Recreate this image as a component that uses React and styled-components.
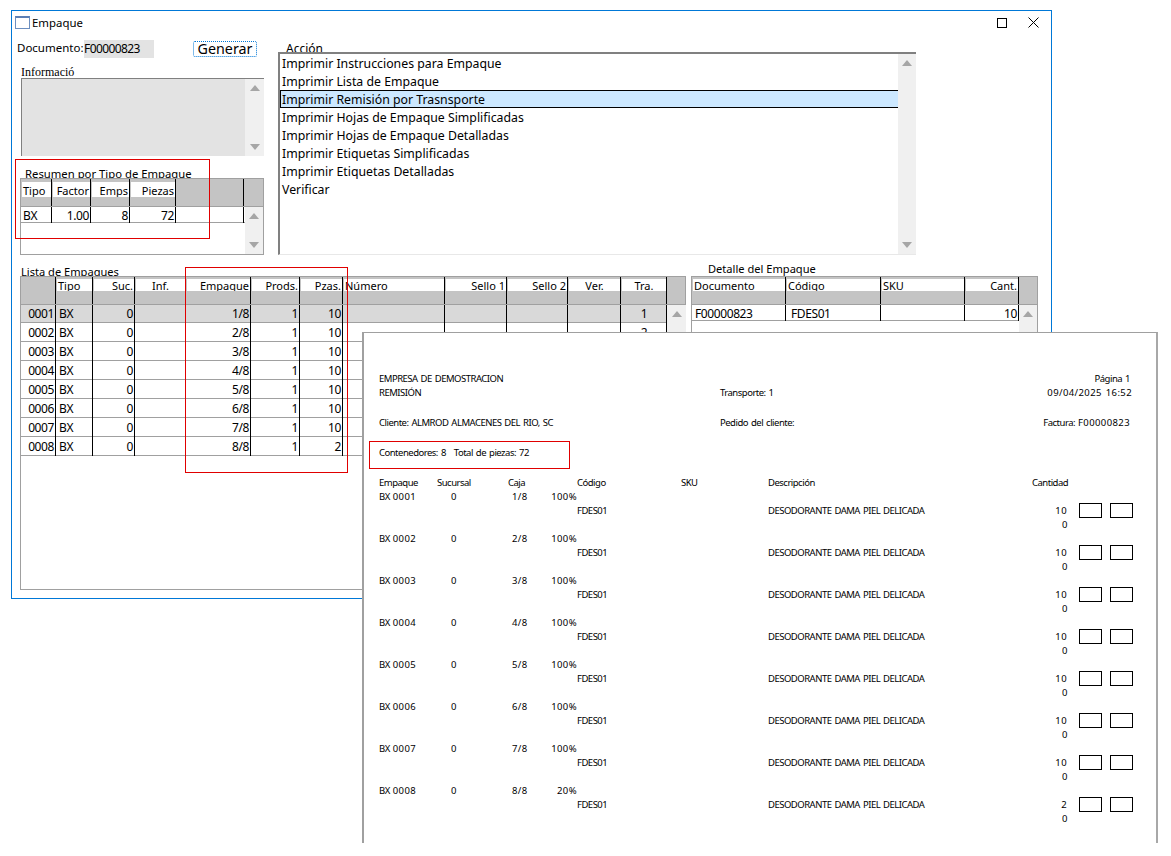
import React from 'react';
import styled, { createGlobalStyle } from 'styled-components';

const Global = createGlobalStyle`
  html, body { margin: 0; padding: 0; background: #fff; }
  body { font-family: "Noto Sans", "Open Sans", sans-serif; font-size: 12px; color: #000; }
`;

const Desk = styled.div`
  position: relative;
  width: 1171px;
  height: 856px;
  overflow: hidden;
`;
const Window = styled.div`
  position: absolute;
  left: 11px;
  top: 10px;
  width: 1041px;
  height: 589px;
  box-sizing: border-box;
  border: 1px solid #0078d7;
  background: #fff;
`;
const TitleBar = styled.div`
  height: 29px;
  display: flex;
  align-items: center;
  padding: 0 12px 6px 3px;
  box-sizing: border-box;
  gap: 2px;
`;
const TitleIcon = styled.span`
  width: 13px;
  height: 10px;
  border: 1px solid #6d8fc0;
  border-top: 2px solid #5b7fb5;
  box-sizing: content-box;
`;
const TitleText = styled.span`
  font-size: 11.4px;
  flex: 1;
`;
const WinButtons = styled.div`
  display: flex;
  align-items: center;
  gap: 21px;
`;
const TopArea = styled.div`
  display: flex;
  padding-left: 5px;
`;
const LeftCol = styled.div`
  width: 247px;
  flex: none;
`;
const DocRow = styled.div`
  height: 26px;
  display: flex;
  align-items: flex-start;
`;
const DocLabel = styled.span`
  line-height: 15px;
  font-size: 11.5px;
  width: 67px;
  flex: none;
`;
const DocValue = styled.span`
  width: 70px;
  height: 18px;
  line-height: 17px;
  background: #e3e3e3;
  font-size: 12px;
  letter-spacing: -0.6px;
  flex: none;
`;
const GenerarBtn = styled.button`
  margin: 1px 0 0 39px;
  width: 64px;
  height: 16px;
  padding: 0;
  font-family: inherit;
  font-size: 14.3px;
  line-height: 14px;
  background: #fff;
  color: #000;
  border: 1px dotted #0078d7;
  border-radius: 2px;
`;
const SerifLabel = styled.div`
  font-family: "Liberation Serif", serif;
  font-size: 12px;
  line-height: 12px;
  height: 12px;
  margin-left: 4px;
`;
const InfoBox = styled.div`
  margin-left: 4px;
  width: 243px;
  height: 78px;
  box-sizing: border-box;
  display: flex;
  justify-content: flex-end;
  background: #e3e3e3;
  border-top: 1px solid #808080;
  border-left: 1px solid #808080;
`;
const ClipLabel = styled.div`
  height: ${p => p.$h}px;
  margin-top: ${p => p.$top || 0}px;
  padding-left: ${p => p.$left}px;
  line-height: ${p => p.$lh || 16}px;
  font-size: ${p => p.$size || 12}px;
  overflow: hidden;
  white-space: nowrap;
`;
const MidCol = styled.div`
  width: 638px;
  margin-left: 14px;
  flex: none;
`;
const ListBox = styled.div`
  height: 203px;
  box-sizing: border-box;
  display: flex;
  border-top: 2px solid #808080;
  border-left: 2px solid #808080;
  border-bottom: 1px solid #e8e8e8;
`;
const ListItems = styled.div`
  flex: 1;
`;
const ListItem = styled.div`
  height: 18px;
  box-sizing: border-box;
  line-height: 19px;
  font-size: 12.3px;
  padding-left: 2px;
  white-space: nowrap;
  ${p => p.$selected && `
    background: #cce8ff;
    border-top: 1px solid #000;
    border-bottom: 1px solid #000;
    border-left: 1px solid #000;
    padding-left: 1px;
    line-height: 17px;
  `}
`;
const Scroll = styled.div`
  width: ${p => p.$w || 18}px;
  flex: none;
  background: #f0f0f0;
  display: flex;
  flex-direction: column;
  justify-content: space-between;
  align-items: center;
  padding: 6px 0;
  box-sizing: border-box;
`;
const Arrow = styled.span`
  width: 0;
  height: 0;
  border-left: 5px solid transparent;
  border-right: 5px solid transparent;
  ${p => p.$down ? 'border-top: 6px solid #a6a6a6;' : 'border-bottom: 6px solid #a6a6a6;'}
`;
const BottomArea = styled.div`
  display: flex;
  align-items: flex-end;
  margin-top: 7px;
  padding-left: 8px;
`;
const Panel = styled.div`
  width: ${p => p.$w}px;
  margin-left: ${p => p.$ml || 0}px;
  flex: none;
`;
const Frame = styled.div`
  box-sizing: border-box;
  width: ${p => p.$w}px;
  height: ${p => p.$h}px;
  margin-left: ${p => p.$ml || 0}px;
  border: 1px solid #a0a0a0;
  background: #fff;
  display: flex;
  flex-direction: column;
`;
const Head = styled.div`
  height: 27px;
  flex: none;
  display: flex;
  background: #c4c4c4;
  border-bottom: 1px solid #a0a0a0;
  box-sizing: content-box;
`;
const HeadCell = styled.div`
  width: ${p => p.$w}px;
  flex: none;
  box-sizing: border-box;
  border-right: 1px solid #000;
  padding: ${p => (p.$strip > 12 ? 3 : 2)}px 0 0 1px;
`;
const HeadLabel = styled.div`
  height: ${p => p.$strip}px;
  line-height: ${p => p.$strip + 2}px;
  background: #fff;
  font-size: 11px;
  padding: 0 1px;
  overflow: hidden;
  white-space: nowrap;
  text-align: ${p => p.$align || 'left'};
`;
const Body = styled.div`
  flex: 1;
  display: flex;
  min-height: 0;
`;
const Rows = styled.div`
  flex: 1;
`;
const Row = styled.div`
  display: flex;
  height: ${p => p.$h}px;
  background-color: ${p => (p.$selected ? '#d9d9d9' : '#fff')};
  background-image: linear-gradient(#a0a0a0, #a0a0a0);
  background-size: 100% 1px;
  background-position: bottom;
  background-repeat: no-repeat;
`;
const Cell = styled.div`
  width: ${p => p.$w}px;
  flex: none;
  box-sizing: border-box;
  border-right: 1px solid #000;
  padding: 0 1px 0 ${p => p.$pl || 2}px;
  line-height: ${p => p.$lh}px;
  font-size: 12px;
  letter-spacing: -0.4px;
  white-space: nowrap;
  overflow: hidden;
  text-align: ${p => p.$align || 'left'};
`;

const Report = styled.div`
  position: absolute;
  left: 362px;
  top: 332px;
  width: 796px;
  height: 511px;
  box-sizing: border-box;
  background: #fff;
  border-top: 1px solid #a0a0a0;
  border-left: 2px solid #a0a0a0;
  border-right: 2px solid #a8a8a8;
  padding: 39px 24px 0 15px;
  font-size: 9.5px;
  letter-spacing: -0.5px;
  word-spacing: 1px;
  line-height: 14px;
  white-space: nowrap;
`;
const ReportHead = styled.div`
  display: grid;
  grid-template-columns: 341px 1fr auto;
  grid-auto-rows: 14px;
  margin-top: ${p => p.$top || 0}px;
`;
const Right = styled.span`
  text-align: right;
  padding-right: ${p => p.$pr || 0}px;
`;
const Num = styled.span`
  letter-spacing: 0.4px;
`;
const Totals = styled.div`
  height: 14px;
  margin: 16px 0;
  display: flex;
  gap: 8px;
`;
const ReportRow = styled.div`
  display: grid;
  grid-template-columns: 58px 71px 40px 29px 104px 87px 264px 35px 46px;
  grid-auto-rows: 14px;
`;
const RCell = styled.span`
  text-align: ${p => p.$align || 'left'};
  padding-left: ${p => p.$pl || 0}px;
  grid-column: ${p => p.$col};
  grid-row: ${p => p.$row};
`;
const CheckBoxes = styled.div`
  grid-column: 9;
  grid-row: 2;
  display: flex;
  gap: 8px;
  padding-left: 12px;
  margin-top: -1px;
`;
const CheckBox = styled.span`
  width: 21px;
  height: 13px;
  border: 1px solid #000;
  flex: none;
`;
const RedBox = styled.div`
  position: absolute;
  left: ${p => p.$x}px;
  top: ${p => p.$y}px;
  width: ${p => p.$w}px;
  height: ${p => p.$h}px;
  box-sizing: border-box;
  border: 1px solid #e00000;
  pointer-events: none;
`;

const actions = [
  'Imprimir Instrucciones para Empaque',
  'Imprimir Lista de Empaque',
  'Imprimir Remisión por Trasnsporte',
  'Imprimir Hojas de Empaque Simplificadas',
  'Imprimir Hojas de Empaque Detalladas',
  'Imprimir Etiquetas Simplificadas',
  'Imprimir Etiquetas Detalladas',
  'Verificar',
];

const resumenCols = [
  { label: 'Tipo', w: 31 },
  { label: 'Factor', w: 39, align: 'right' },
  { label: 'Emps', w: 39, align: 'right' },
  { label: 'Piezas', w: 46, align: 'right' },
  { label: '', w: 68, plain: true },
];

const listaCols = [
  { label: '', w: 35, align: 'right', plain: true },
  { label: 'Tipo', w: 37, pl: 3 },
  { label: 'Suc.', w: 42, align: 'right' },
  { label: 'Inf.', w: 51, align: 'center' },
  { label: 'Empaque', w: 65, align: 'right' },
  { label: 'Prods.', w: 49, align: 'right' },
  { label: 'Pzas.', w: 43, align: 'right' },
  { label: 'Número', w: 102 },
  { label: 'Sello 1', w: 62, align: 'right' },
  { label: 'Sello 2', w: 61, align: 'right' },
  { label: 'Ver.', w: 53, align: 'center' },
  { label: 'Tra.', w: 46, align: 'center' },
];

const detalleCols = [
  { label: 'Documento', w: 94, pl: 3 },
  { label: 'Código', w: 95, pl: 5 },
  { label: 'SKU', w: 84 },
  { label: 'Cant.', w: 54, align: 'right' },
];

const pieces = [10, 10, 10, 10, 10, 10, 10, 2];
const listaRows = pieces.map((p, i) => [
  `000${i + 1}`, 'BX', '0', '', `${i + 1}/8`, '1', String(p), '', '', '', '', String(i + 1),
]);

function Scrollbar({ w }) {
  return (
    <Scroll $w={w}>
      <Arrow />
      <Arrow $down />
    </Scroll>
  );
}

function DataGrid({ cols, rows, rowH, firstH, lh, strip, frameW, frameH, ml, scrollW, selected }) {
  return (
    <Frame $w={frameW} $h={frameH} $ml={ml}>
      <Head>
        {cols.map((c, i) => (
          <HeadCell key={i} $w={c.w} $strip={strip}>
            {!c.plain && <HeadLabel $strip={strip} $align={c.align}>{c.label}</HeadLabel>}
          </HeadCell>
        ))}
      </Head>
      <Body>
        <Rows>
          {rows.map((r, i) => {
            const first = i === 0 && firstH;
            const h = first ? firstH : rowH;
            return (
              <Row key={i} $h={h} $selected={i === selected}>
                {cols.map((c, j) => (
                  <Cell key={j} $w={c.w} $lh={lh ?? (first ? h - 1 : h)} $align={c.align} $pl={c.pl}>{r[j]}</Cell>
                ))}
              </Row>
            );
          })}
        </Rows>
        <Scrollbar w={scrollW} />
      </Body>
    </Frame>
  );
}

function WindowControls() {
  return (
    <WinButtons>
      <svg width="10" height="10" viewBox="0 0 10 10">
        <rect x="0.5" y="0.5" width="9" height="9" fill="none" stroke="#000" />
      </svg>
      <svg width="11" height="11" viewBox="0 0 11 11">
        <path d="M0.5 0.5 L10.5 10.5 M10.5 0.5 L0.5 10.5" stroke="#000" strokeWidth="1" fill="none" />
      </svg>
    </WinButtons>
  );
}

export default function App() {
  return (
    <Desk>
      <Global />
      <Window>
        <TitleBar>
          <TitleIcon />
          <TitleText>Empaque</TitleText>
          <WindowControls />
        </TitleBar>
        <TopArea>
          <LeftCol>
            <DocRow>
              <DocLabel>Documento:</DocLabel>
              <DocValue>F00000823</DocValue>
              <GenerarBtn>Generar</GenerarBtn>
            </DocRow>
            <SerifLabel>Informació</SerifLabel>
            <InfoBox><Scrollbar w={19} /></InfoBox>
            <ClipLabel $h={13} $top={9} $left={8} $size={11.3} $lh={18}>Resumen por Tipo de Empaque</ClipLabel>
            <DataGrid
              cols={resumenCols}
              rows={[['BX', '1.00', '8', '72', '']]}
              rowH={16}
              lh={17}
              strip={15}
              frameW={244}
              frameH={77}
              ml={3}
              scrollW={18}
            />
          </LeftCol>
          <MidCol>
            <ClipLabel $h={11} $top={1} $left={8} $lh={15}>Acción</ClipLabel>
            <ListBox>
              <ListItems>
                {actions.map((a, i) => (
                  <ListItem key={a} $selected={i === 2}>{a}</ListItem>
                ))}
              </ListItems>
              <Scrollbar w={18} />
            </ListBox>
          </MidCol>
        </TopArea>
        <BottomArea>
          <Panel $w={666}>
            <ClipLabel $h={12} $left={1} $size={11.1} $lh={15}>Lista de Empaques</ClipLabel>
            <DataGrid
              cols={listaCols}
              rows={listaRows}
              rowH={19}
              firstH={18}
              strip={12}
              frameW={666}
              frameH={314}
              scrollW={19}
              selected={0}
            />
          </Panel>
          <Panel $w={347} $ml={5}>
            <ClipLabel $h={14} $left={17} $size={11.1} $lh={13}>Detalle del Empaque</ClipLabel>
            <DataGrid
              cols={detalleCols}
              rows={[['F00000823', 'FDES01', '', '10']]}
              rowH={16}
              lh={17}
              strip={12}
              frameW={347}
              frameH={314}
              scrollW={18}
            />
          </Panel>
        </BottomArea>
      </Window>

      <RedBox $x={15} $y={159} $w={195} $h={80} />
      <RedBox $x={185} $y={267} $w={163} $h={206} />

      <Report>
        <ReportHead>
          <span>EMPRESA DE DEMOSTRACION</span>
          <span />
          <Right $pr={2}>Página 1</Right>
          <span>REMISIÓN</span>
          <span>Transporte: 1</span>
          <Right><Num>09/04/2025 16:52</Num></Right>
        </ReportHead>
        <ReportHead $top={16}>
          <span>Cliente: ALMROD ALMACENES DEL RIO, SC</span>
          <span>Pedido del cliente:</span>
          <Right $pr={2}>Factura: <Num>F00000823</Num></Right>
        </ReportHead>
        <Totals>
          <span>Contenedores: 8</span>
          <span>Total de piezas: 72</span>
        </Totals>
        <ReportRow>
          <RCell>Empaque</RCell>
          <RCell>Sucursal</RCell>
          <RCell>Caja</RCell>
          <RCell />
          <RCell>Código</RCell>
          <RCell>SKU</RCell>
          <RCell>Descripción</RCell>
          <RCell $align="right">Cantidad</RCell>
        </ReportRow>
        {pieces.map((p, i) => (
          <ReportRow key={i}>
            <RCell $col={1} $row={1}>BX <Num>000{i + 1}</Num></RCell>
            <RCell $col={2} $row={1} $pl={14}>0</RCell>
            <RCell $col={3} $row={1} $pl={4}><Num>{i + 1}/8</Num></RCell>
            <RCell $col={4} $row={1} $align="right"><Num>{p === 10 ? '100%' : '20%'}</Num></RCell>
            <RCell $col={5} $row={2}>FDES01</RCell>
            <RCell $col={7} $row={2}>DESODORANTE DAMA PIEL DELICADA</RCell>
            <RCell $col={8} $row={2} $align="right"><Num>{p}</Num></RCell>
            <RCell $col={8} $row={3} $align="right">0</RCell>
            <CheckBoxes>
              <CheckBox />
              <CheckBox />
            </CheckBoxes>
          </ReportRow>
        ))}
        <RedBox $x={5} $y={108} $w={201} $h={28} />
      </Report>
    </Desk>
  );
}
